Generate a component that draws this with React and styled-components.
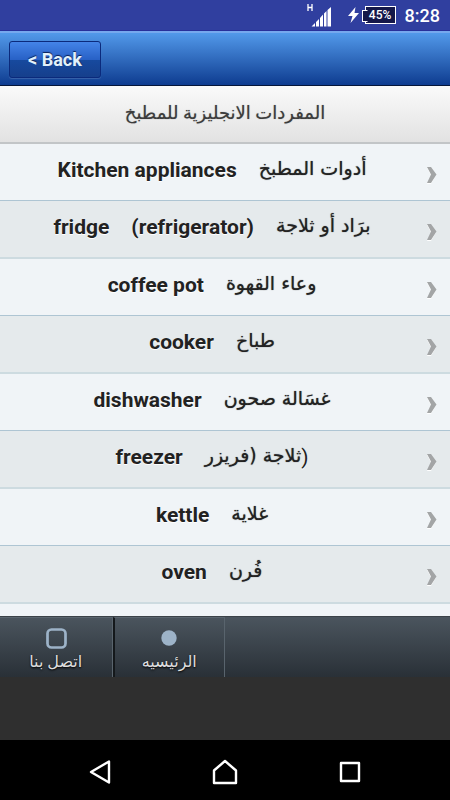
import styled, { createGlobalStyle } from "styled-components";

const GlobalStyle = createGlobalStyle`
  * {
    box-sizing: border-box;
  }
  body {
    margin: 0;
    background: #2f2f2f;
    font-family: Roboto, "DejaVu Sans", sans-serif;
  }
`;

const Screen = styled.div`
  display: flex;
  flex-direction: column;
  height: 100vh;
`;

const StatusBar = styled.div`
  flex: none;
  display: flex;
  align-items: center;
  justify-content: flex-end;
  height: 31px;
  padding-right: 10px;
  background: #303f9f;
  border-bottom: 1px solid #28309a;
  color: #fff;
`;

const Signal = styled.svg`
  width: 26px;
  height: 24px;
  margin-right: 16px;
`;

const Bolt = styled.svg`
  width: 11px;
  height: 16px;
  margin-right: 6px;
`;

const Battery = styled.div`
  position: relative;
  width: 31px;
  height: 18px;
  margin-right: 9px;
  border: 1px solid #fff;
  background: #14184a;
  font-size: 12px;
  font-weight: 500;
  line-height: 16px;
  text-align: center;

  &::before {
    content: "";
    position: absolute;
    left: -4px;
    top: 3px;
    width: 4px;
    height: 10px;
    border: 1px solid #fff;
    border-right: 1px solid #14184a;
    background: #14184a;
  }
`;

const Clock = styled.span`
  font-size: 18px;
  font-weight: 500;
  line-height: 30px;
  padding-top: 2px;
`;

const Header = styled.header`
  flex: none;
  height: 55px;
  padding: 8px 9px;
  background: linear-gradient(#5299ea, #0e3c90);
  border-top: 2px solid #76a8ee;
  border-bottom: 1px solid #05163a;
`;

const BackButton = styled.button`
  display: block;
  height: 37px;
  padding: 0 18px;
  border: 1px solid #0b2a7c;
  border-radius: 3px;
  background: linear-gradient(#4484e8, #2861c6 50%, #174a9f 50%, #163f8c);
  box-shadow: 0 1px 1px rgba(255, 255, 255, 0.15);
  color: #e2f1fb;
  font-family: inherit;
  font-size: 18px;
  font-weight: 700;
  line-height: 32px;
  text-shadow: 0 -1px 1px #0a1f52;
`;

const Title = styled.h1`
  flex: none;
  height: 58px;
  margin: 0;
  background: linear-gradient(#fafafa, #e2e2e2);
  border-bottom: 2px solid #c2c5c7;
  color: #3c3c3c;
  font-size: 18px;
  font-weight: 400;
  line-height: 54px;
  text-align: center;
  text-shadow: 0 0 1px #8a8a8a;
`;

const List = styled.ul`
  flex: 1;
  min-height: 0;
  margin: 0;
  padding: 0;
  overflow-y: auto;
  scrollbar-width: none;
  list-style: none;
`;

const Item = styled.li`
  height: 57px;
  background: #f0f4f7;
  border-bottom: 1px solid #aec5d3;

  &:nth-child(even) {
    height: 58px;
    background: #e5eaec;
    border-bottom: 2px solid #cddbe0;
  }
`;

const ItemLink = styled.a`
  display: flex;
  align-items: center;
  height: 100%;
  padding: 0 12px 0 0;
  color: #222;
  text-decoration: none;
`;

const Words = styled.span`
  flex: 1;
  display: flex;
  justify-content: center;
  align-items: baseline;
  gap: 22px;
  padding: 0 14px 4px 12px;
  font-size: 21px;
  font-weight: 700;
  line-height: 28px;
  text-shadow: 0 1px 0 #fff;
  white-space: nowrap;
`;

const ArabicWords = styled.span`
  font-weight: 400;
`;

const Arabic = styled.bdi`
  font-family: "DejaVu Sans", sans-serif;
  font-size: 19px;
  line-height: 20px;
  vertical-align: 2px;
  text-shadow: 0 0 1px #555;
`;

const Chevron = styled.svg`
  width: 12px;
  height: 18px;
  margin-top: 6px;
`;

const TabBar = styled.nav`
  flex: none;
  display: flex;
  height: 61px;
  margin-bottom: 63px;
  background: linear-gradient(#4b555e, #293037);
  border-top: 1px solid #3b4248;
`;

const Tab = styled.a`
  flex: 0 0 25%;
  display: flex;
  flex-direction: column;
  align-items: center;
  padding-top: 9px;
  border-top: 1px solid #5a656e;
  border-right: 1px solid #59646d;
  color: #dedede;
  font-size: 16px;
  line-height: 26px;
  text-decoration: none;
  text-shadow: 0 1px 2px #000;

  & + & {
    border-left: 2px solid #14181b;
  }
`;

const TabIcon = styled.svg`
  width: 22px;
  height: 22px;
`;

const SystemNav = styled.nav`
  flex: none;
  display: grid;
  grid-template-columns: repeat(3, 125px);
  justify-content: center;
  height: 60px;
  background: #000;
`;

const NavButton = styled.button`
  display: flex;
  align-items: center;
  justify-content: center;
  padding: 4px 0 0;
  border: 0;
  background: none;

  svg {
    width: 28px;
    height: 28px;
    fill: none;
    stroke: #fff;
    stroke-width: 2.4;
    stroke-linejoin: round;
  }
`;

const words = [
  { en: ["Kitchen appliances"], ar: "أدوات المطبخ" },
  { en: ["fridge", "(refrigerator)"], ar: "برَاد أو ثلاجة" },
  { en: ["coffee pot"], ar: "وعاء القهوة" },
  { en: ["cooker"], ar: "طباخ" },
  { en: ["dishwasher"], ar: "غسَالة صحون" },
  { en: ["freezer"], ar: "ثلاجة (فريزر", end: ")" },
  { en: ["kettle"], ar: "غلاية" },
  { en: ["oven"], ar: "فُرن" },
];

const WordRow = ({ word }) => (
  <Item>
    <ItemLink href="#">
      <Words>
        {word.en.map((text) => (
          <span key={text}>{text}</span>
        ))}
        <ArabicWords>
          <Arabic lang="ar" dir="rtl">
            {word.ar}
          </Arabic>
          {word.end}
        </ArabicWords>
      </Words>
      <Chevron viewBox="0 0 12 18" aria-hidden="true">
        <path d="M1 2H5L10 9.500L5 18H1L5 9.500Z" fill="#fff" />
        <path d="M1 1H5L10.500 8.500L5 17H1L5 8.500Z" fill="#a3a5a6" />
      </Chevron>
    </ItemLink>
  </Item>
);

const App = () => {
  return (
    <Screen>
      <GlobalStyle />
      <StatusBar>
        <Signal viewBox="0 0 26 24" fill="#fff">
          <path
            d="M2 1V8M6 1V8M2 4.500H6"
            stroke="#fff"
            strokeWidth="1.300"
          />
          <path d="M5.500 23.500L9 20V23.500ZM10 19L13 16V23.500H10ZM14 15L17 11.500V23.500H14ZM18 10.500L20.500 8V23.500H18ZM21.500 7L25 4V23.500H21.500Z" />
        </Signal>
        <Bolt viewBox="0 0 11 16" fill="#fff">
          <path d="M7.500 0L0 9H4.500L2.500 16L11 6H6.500Z" />
        </Bolt>
        <Battery>45%</Battery>
        <Clock>8:28</Clock>
      </StatusBar>
      <Header>
        <BackButton type="button">&lt; Back</BackButton>
      </Header>
      <Title lang="ar" dir="rtl">
        المفردات الانجليزية للمطبخ
      </Title>
      <List>
        {words.map((word) => (
          <WordRow key={word.ar} word={word} />
        ))}
        <Item />
      </List>
      <TabBar>
        <Tab href="#" lang="ar">
          <TabIcon viewBox="0 0 22 22">
            <rect
              x="2.500"
              y="2.500"
              width="18"
              height="18"
              rx="4"
              fill="none"
              stroke="#9db3c8"
              strokeWidth="2.700"
            />
          </TabIcon>
          اتصل بنا
        </Tab>
        <Tab href="#" lang="ar">
          <TabIcon viewBox="0 0 22 22">
            <circle cx="11" cy="11" r="7.700" fill="#9db3c8" />
          </TabIcon>
          الرئيسيه
        </Tab>
      </TabBar>
      <SystemNav>
        <NavButton type="button" aria-label="Back">
          <svg viewBox="0 0 28 28">
            <path d="M5 14L23 3.500V24.500Z" />
          </svg>
        </NavButton>
        <NavButton type="button" aria-label="Home">
          <svg viewBox="0 0 28 28">
            <path d="M3 12.500L14 3L25 12.500V25H3Z" />
          </svg>
        </NavButton>
        <NavButton type="button" aria-label="Recent apps">
          <svg viewBox="0 0 28 28">
            <rect x="5" y="5" width="18" height="18" />
          </svg>
        </NavButton>
      </SystemNav>
    </Screen>
  );
};

export default App;
